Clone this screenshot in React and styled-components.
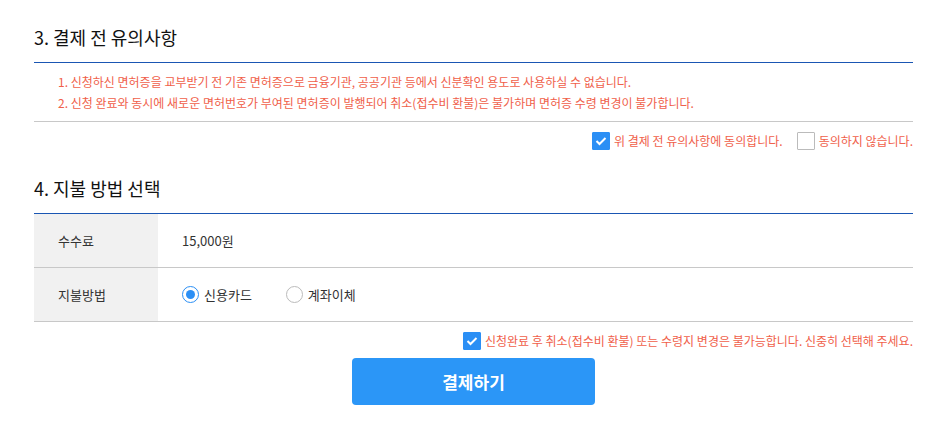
import React, { useState } from "react";
import styled, { createGlobalStyle } from "styled-components";

const GlobalStyle = createGlobalStyle`
  body {
    margin: 0;
    background: #fff;
    font-family: "Noto Sans CJK KR", "Noto Sans", sans-serif;
    color: #333;
  }
`;

const Page = styled.div`
  width: 879px;
  padding: 0 32px 0 34px;
`;

const Title = styled.h3`
  margin: 0;
  padding: ${(p) => p.$top || 24}px 0 12px;
  font-size: 18px;
  line-height: 26px;
  font-weight: 400;
  color: #111;
  border-bottom: 1px solid #1a56b3;
`;

const NoticeList = styled.ol`
  list-style: none;
  margin: 0;
  padding: 8px 0 8px 24px;
  border-bottom: 1px solid #c8c8c8;
`;

const Notice = styled.li`
  font-size: 12px;
  line-height: 21px;
  color: #f0604a;
`;

const AgreeRow = styled.div`
  display: flex;
  justify-content: flex-end;
  align-items: center;
  gap: 14px;
  padding-top: 10px;
`;

const CheckLabel = styled.label`
  display: flex;
  align-items: center;
  gap: 4px;
  font-size: 12px;
  line-height: 18px;
  color: #f0604a;
  cursor: pointer;
`;

const Box = styled.span`
  width: 18px;
  height: 18px;
  box-sizing: border-box;
  border-radius: 1px;
  display: flex;
  align-items: center;
  justify-content: center;
  background: ${(p) => (p.$checked ? "#2b8ff5" : "#fff")};
  border: 1px solid ${(p) => (p.$checked ? "#2b8ff5" : "#bbb")};
`;

const Check = ({ checked, children, onClick }) => (
  <CheckLabel onClick={onClick}>
    <Box $checked={checked}>
      {checked && (
        <svg width="12" height="10" viewBox="0 0 12 10">
          <path d="M1.5 5 L4.5 8 L10.5 2" fill="none" stroke="#fff" strokeWidth="2" />
        </svg>
      )}
    </Box>
    {children}
  </CheckLabel>
);

const Table = styled.div`
  display: grid;
  grid-template-columns: 124px 1fr;
`;

const Th = styled.div`
  background: #f1f1f1;
  height: 53px;
  padding-left: 24px;
  display: flex;
  align-items: center;
  font-size: 13px;
  color: #333;
  border-bottom: 1px solid #c8c8c8;
`;

const Td = styled.div`
  height: 53px;
  padding-left: 24px;
  display: flex;
  align-items: center;
  font-size: 13px;
  color: #333;
  border-bottom: 1px solid #c8c8c8;
  gap: 34px;
`;

const RadioLabel = styled.label`
  display: flex;
  align-items: center;
  gap: 5px;
  cursor: pointer;
`;

const RadioCircle = styled.span`
  width: 17px;
  height: 17px;
  box-sizing: border-box;
  border-radius: 50%;
  border: 1px solid ${(p) => (p.$checked ? "#2b8ff5" : "#bbb")};
  display: flex;
  align-items: center;
  justify-content: center;
  &::after {
    content: "";
    width: 9px;
    height: 9px;
    border-radius: 50%;
    background: ${(p) => (p.$checked ? "#2b8ff5" : "transparent")};
  }
`;

const Radio = ({ checked, children, onClick }) => (
  <RadioLabel onClick={onClick}>
    <RadioCircle $checked={checked} />
    {children}
  </RadioLabel>
);

const ButtonRow = styled.div`
  display: flex;
  justify-content: center;
  padding-top: 8px;
`;

const PayButton = styled.button`
  width: 243px;
  height: 47px;
  border: 0;
  border-radius: 4px;
  background: #2b96f7;
  color: #fff;
  font-family: inherit;
  font-size: 17px;
  font-weight: 700;
  cursor: pointer;
`;

export default function App() {
  const [agree, setAgree] = useState(true);
  const [method, setMethod] = useState("card");
  const [confirm, setConfirm] = useState(true);

  return (
    <Page>
      <GlobalStyle />
      <Title>3. 결제 전 유의사항</Title>
      <NoticeList>
        <Notice>1. 신청하신 면허증을 교부받기 전 기존 면허증으로 금융기관, 공공기관 등에서 신분확인 용도로 사용하실 수 없습니다.</Notice>
        <Notice>2. 신청 완료와 동시에 새로운 면허번호가 부여된 면허증이 발행되어 취소(접수비 환불)은 불가하며 면허증 수령 변경이 불가합니다.</Notice>
      </NoticeList>
      <AgreeRow>
        <Check checked={agree} onClick={() => setAgree(true)}>위 결제 전 유의사항에 동의합니다.</Check>
        <Check checked={!agree} onClick={() => setAgree(false)}>동의하지 않습니다.</Check>
      </AgreeRow>

      <Title $top={25}>4. 지불 방법 선택</Title>
      <Table>
        <Th>수수료</Th>
        <Td>15,000원</Td>
        <Th>지불방법</Th>
        <Td>
          <Radio checked={method === "card"} onClick={() => setMethod("card")}>신용카드</Radio>
          <Radio checked={method === "bank"} onClick={() => setMethod("bank")}>계좌이체</Radio>
        </Td>
      </Table>
      <AgreeRow>
        <Check checked={confirm} onClick={() => setConfirm(!confirm)}>
          신청완료 후 취소(접수비 환불) 또는 수령지 변경은 불가능합니다. 신중히 선택해 주세요.
        </Check>
      </AgreeRow>
      <ButtonRow>
        <PayButton>결제하기</PayButton>
      </ButtonRow>
    </Page>
  );
}
